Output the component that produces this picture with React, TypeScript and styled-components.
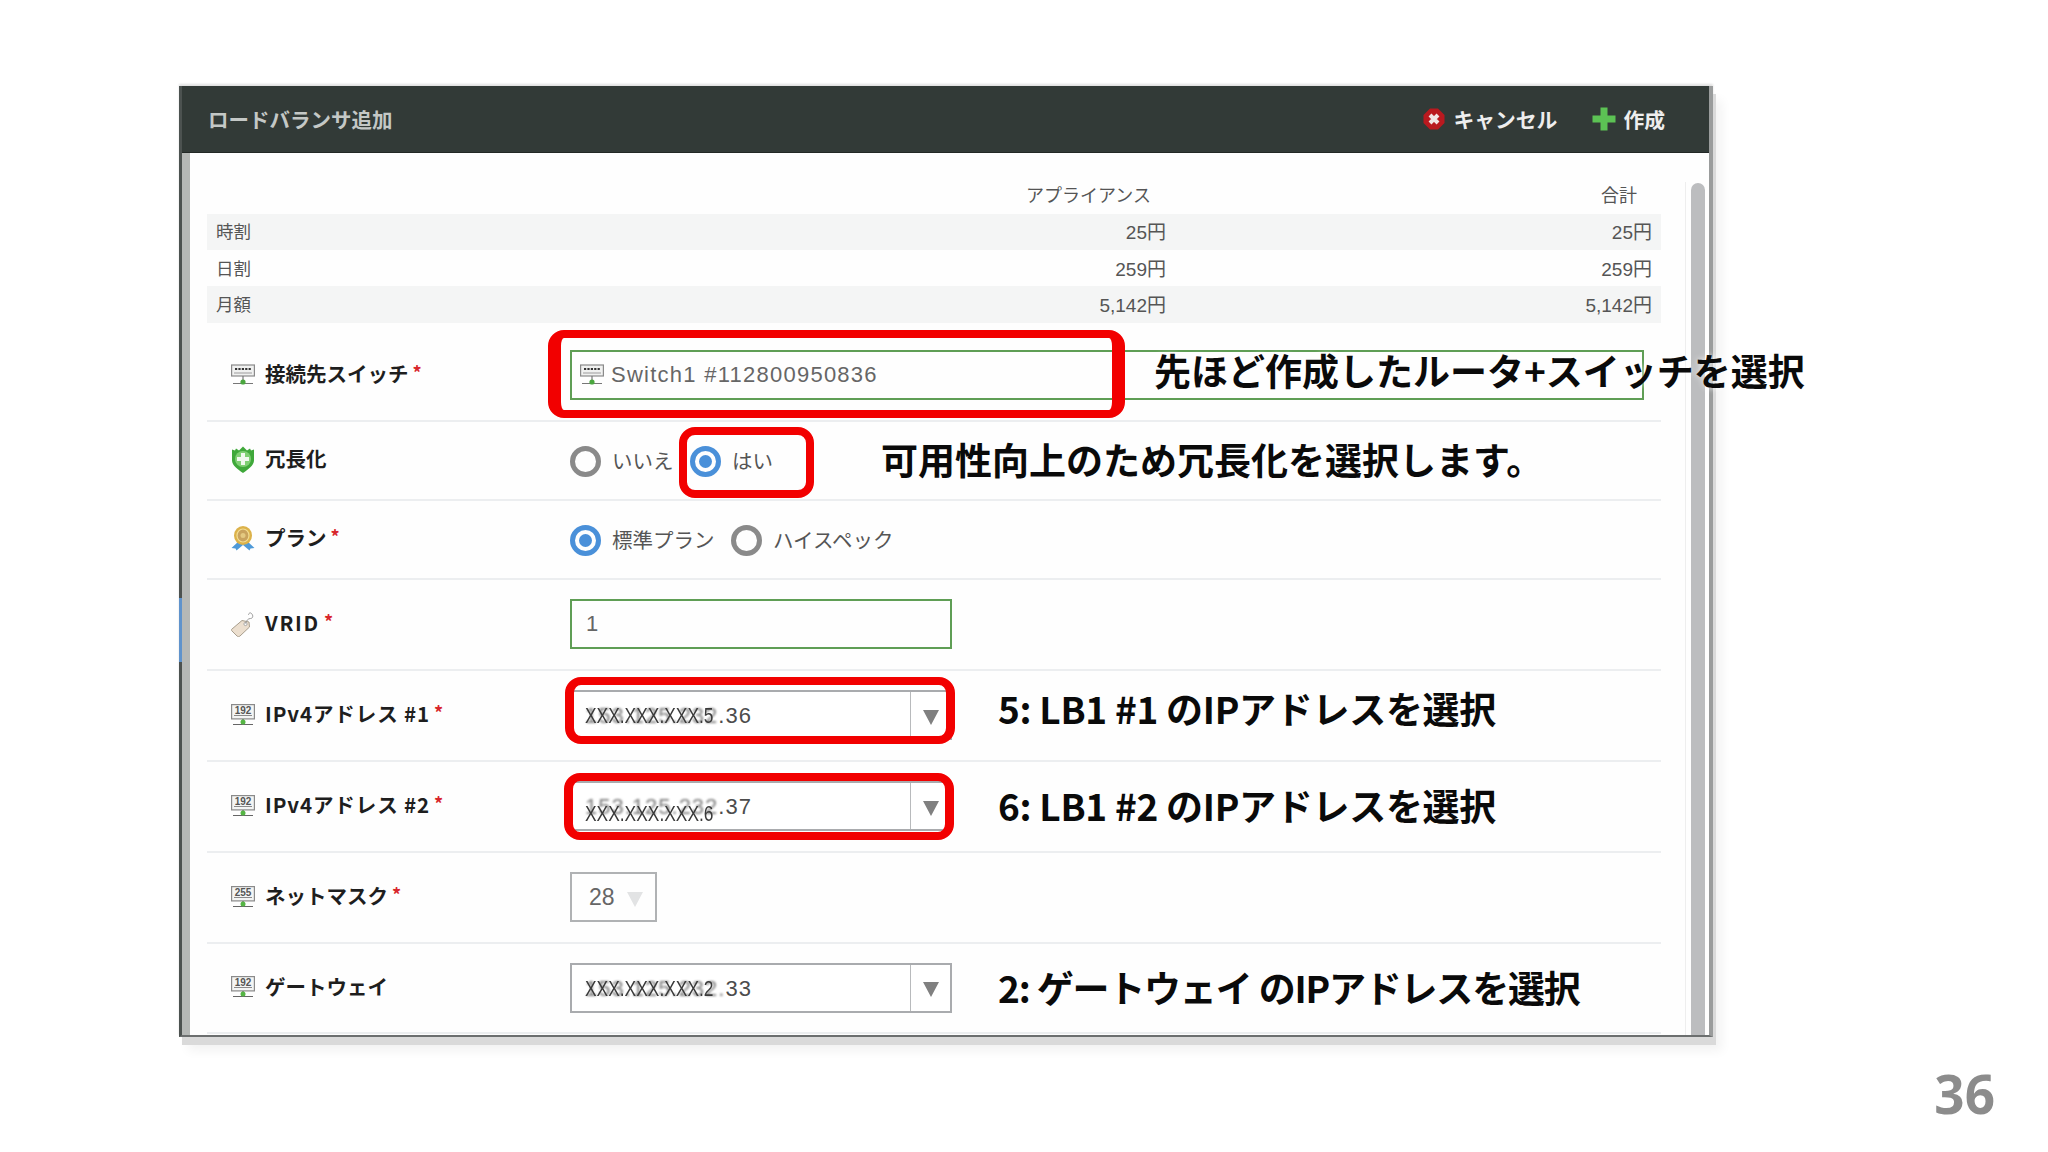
import React from 'react';
import styled, { createGlobalStyle } from 'styled-components';

const GlobalStyle = createGlobalStyle`
  html, body {
    margin: 0;
    padding: 0;
    background: #ffffff;
  }
  body {
    font-family: 'Noto Sans CJK JP', 'Noto Sans', sans-serif;
  }
`;

const Page = styled.div`
  position: relative;
  width: 2048px;
  height: 1152px;
  padding: 86px 0 0 179px;
  box-sizing: border-box;
  overflow: hidden;
  background: #ffffff;
`;

// --- Dialog panel ---

const Panel = styled.div`
  width: 1534px;
  height: 951px;
  box-sizing: border-box;
  display: flex;
  flex-direction: column;
  background: #fefefe;
  border-left: 3px solid #4c5250;
  border-right: 4px solid #9a9c9c;
  border-bottom: 2px solid #6c6f6f;
  box-shadow: 3px 8px 0 #dadada, 9px 14px 10px rgba(0, 0, 0, 0.05), 0 -2px 2px rgba(0, 0, 0, 0.12);
`;

const Header = styled.div`
  height: 67px;
  flex-shrink: 0;
  display: flex;
  align-items: center;
  padding: 0 44px 0 26px;
  background: #323a37;
  border-bottom: 1px solid #222826;
  box-sizing: border-box;
`;

const HeaderTitle = styled.div`
  flex: 1;
  font-size: 20.5px;
  font-weight: 700;
  color: #c4c8c6;
`;

const HeaderAction = styled.div<{ $gap: number }>`
  display: flex;
  align-items: center;
  gap: ${(p) => p.$gap}px;
  margin-left: 35px;
  font-size: 20.8px;
  font-weight: 700;
  color: #eeeeee;
`;

const Body = styled.div`
  flex: 1;
  min-height: 0;
  display: flex;
`;

const LeftRail = styled.div`
  position: relative;
  width: 8px;
  flex-shrink: 0;
  background: #b5b8b6;
`;

const RailMark = styled.div`
  position: absolute;
  left: -3px;
  top: 445px;
  width: 3px;
  height: 64px;
  background: #5f93cc;
`;

const Content = styled.div`
  width: 1454px;
  flex-shrink: 0;
  margin-left: 17px;
  display: flex;
  flex-direction: column;
`;

const ScrollTrack = styled.div`
  flex: 1;
  display: flex;
  justify-content: center;
  margin: 29px 0 0 24px;
  border-left: 1px solid #eeeeee;
`;

const ScrollThumb = styled.div`
  width: 14px;
  margin-top: 1px;
  background: #bcbdbf;
  border-radius: 7px 7px 0 0;
`;

// --- Price table ---

const PriceHead = styled.div`
  height: 60.5px;
  box-sizing: border-box;
  padding-top: 26px;
  display: grid;
  grid-template-columns: 959px 495px;
  font-size: 18px;
  color: #555555;
`;

const HeadCellA = styled.div`
  padding-right: 15px;
  text-align: right;
  line-height: 30px;
`;

const HeadCellB = styled.div`
  padding-right: 24px;
  text-align: right;
  line-height: 30px;
`;

const PriceRow = styled.div<{ $striped?: boolean }>`
  height: 36.4px;
  display: grid;
  grid-template-columns: 200px 750px 486px;
  align-items: center;
  padding: 0 0 2px 9px;
  box-sizing: border-box;
  font-size: 17.5px;
  color: #555555;
  background: ${(p) => (p.$striped ? '#f4f5f5' : 'transparent')};
`;

const Amount = styled.div`
  text-align: right;
  font-family: 'Liberation Sans', 'Noto Sans CJK JP', sans-serif;
  font-size: 19px;
`;

// --- Form rows ---

const FormRow = styled.div<{ $h: number; $top?: number }>`
  height: ${(p) => p.$h}px;
  box-sizing: border-box;
  padding: ${(p) => p.$top ?? 0}px 0 0 24px;
  display: flex;
  align-items: center;
  border-bottom: 2px solid #eceef0;
`;

const Label = styled.div`
  width: 339px;
  flex-shrink: 0;
  display: flex;
  align-items: center;
  gap: 10px;
  padding-bottom: 4px;
  box-sizing: border-box;
  font-size: 20.5px;
  font-weight: 700;
  color: #1e1e1e;

  svg {
    margin-top: 3px;
    flex-shrink: 0;
  }
`;

const LabelText = styled.span<{ $track?: number }>`
  letter-spacing: ${(p) => p.$track ?? 0}px;
`;

const Required = styled.span`
  color: #d8262c;
  font-size: 18px;
  position: relative;
  top: -2px;
  margin-left: 4px;
`;

const InputBox = styled.div<{ $w: number; $pad: number }>`
  width: ${(p) => p.$w}px;
  height: 50px;
  box-sizing: border-box;
  display: flex;
  align-items: center;
  gap: 7px;
  padding-left: ${(p) => p.$pad}px;
  border: 2px solid #5f9e55;
  font-family: 'Liberation Sans', sans-serif;
  font-size: 22px;
  letter-spacing: 1.25px;
  color: #666666;
`;

const SelectBox = styled.div`
  width: 382px;
  height: 50px;
  box-sizing: border-box;
  display: flex;
  border: 2px solid #a9abae;
  background: #ffffff;
  font-family: 'Liberation Sans', sans-serif;
  font-size: 22px;
  color: #4c4c4c;
`;

const SelectValue = styled.div`
  position: relative;
  flex: 1;
  padding-left: 13px;
  letter-spacing: 1px;
  line-height: 48px;
  white-space: nowrap;
`;

const Smudge = styled.span`
  color: #7d7d7d;
  filter: blur(1px);
`;

const Masked = styled.span<{ $dy: number }>`
  position: absolute;
  left: 13px;
  top: ${(p) => p.$dy}px;
  transform: scaleX(0.79);
  transform-origin: left center;
  font-family: 'Liberation Sans', sans-serif;
  font-size: 22px;
  letter-spacing: 0;
  color: #3a3a3a;
`;

const CaretCell = styled.div`
  width: 39px;
  flex-shrink: 0;
  display: flex;
  align-items: center;
  justify-content: center;
  border-left: 1px solid #b8babc;
`;

const Caret = styled.div<{ $faint?: boolean }>`
  width: 0;
  height: 0;
  margin-top: 4px;
  border-left: 8px solid transparent;
  border-right: 8px solid transparent;
  border-top: 15px solid ${(p) => (p.$faint ? '#e2e3e4' : '#808080')};
`;

const SmallSelect = styled.div`
  width: 87px;
  height: 50px;
  box-sizing: border-box;
  display: flex;
  align-items: center;
  gap: 12px;
  padding-left: 17px;
  border: 2px solid #b0b2b4;
  font-family: 'Liberation Sans', sans-serif;
  font-size: 23px;
  color: #666666;
`;

const RadioGroup = styled.div`
  display: flex;
  align-items: center;
  font-size: 20.5px;
  line-height: 30px;
  color: #555555;
`;

const RadioItem = styled.div<{ $w: number }>`
  width: ${(p) => p.$w}px;
  display: flex;
  align-items: center;
  gap: 11px;
  flex-shrink: 0;
`;

const Radio = styled.span<{ $on?: boolean }>`
  width: 31px;
  height: 31px;
  margin-top: 3px;
  box-sizing: border-box;
  flex-shrink: 0;
  display: flex;
  align-items: center;
  justify-content: center;
  border-radius: 50%;
  border: 5px solid ${(p) => (p.$on ? '#4a90d9' : '#8a8a8a')};

  &::after {
    content: '';
    width: 13px;
    height: 13px;
    border-radius: 50%;
    background: ${(p) => (p.$on ? '#4a90d9' : 'transparent')};
  }
`;

// --- Things drawn on top of the screenshot ---

const Highlight = styled.div<{ $x: number; $y: number; $w: number; $h: number; $side: number }>`
  position: absolute;
  left: ${(p) => p.$x}px;
  top: ${(p) => p.$y}px;
  width: ${(p) => p.$w}px;
  height: ${(p) => p.$h}px;
  box-sizing: border-box;
  border: 8px solid #f20000;
  border-left-width: ${(p) => p.$side}px;
  border-right-width: ${(p) => p.$side}px;
  border-radius: 16px;
`;

const Note = styled.div<{ $x: number; $y: number; $track?: number }>`
  position: absolute;
  left: ${(p) => p.$x}px;
  top: ${(p) => p.$y}px;
  transform: translateY(-50%);
  font-size: 37px;
  font-weight: 700;
  line-height: 1.2;
  letter-spacing: ${(p) => p.$track ?? 0}px;
  color: #0a0a0a;
  white-space: nowrap;
  text-shadow: 0 0 6px rgba(255, 255, 255, 0.9);
`;

const PageNumber = styled.div`
  position: absolute;
  right: 53px;
  top: 1058px;
  font-family: 'Noto Sans', sans-serif;
  font-size: 53px;
  font-weight: 700;
  line-height: 72px;
  color: #8c8c8c;
`;

// --- Icons ---

const CancelIcon = () => (
  <svg width="22" height="22" viewBox="0 0 22 22">
    <polygon points="7,0.5 15,0.5 21.5,7 21.5,15 15,21.5 7,21.5 0.5,15 0.5,7" fill="#b9191f" />
    <path d="M7 7l8 8M15 7l-8 8" stroke="#f1e6e6" strokeWidth="4" />
  </svg>
);

const PlusIcon = () => (
  <svg width="24" height="24" viewBox="0 0 24 24">
    <path d="M8.5 0.5h7v8h8v7h-8v8h-7v-8h-8v-7h8z" fill="#5cc254" />
  </svg>
);

const SwitchIcon = () => (
  <svg width="24" height="22" viewBox="0 0 24 22">
    <rect x="0.6" y="1" width="22.8" height="11" fill="#f0f1f0" stroke="#8a8a8a" strokeWidth="1.2" />
    <path d="M4 5h2.2M7.4 5h2.2M10.8 5h2.2M14.2 5h2.2M17.600 5h2.2" stroke="#333" strokeWidth="1.8" />
    <path d="M3 9h18" stroke="#aaa" strokeWidth="1.2" />
    <path d="M12 12v7M2 19.5h20" stroke="#777" strokeWidth="1.2" />
    <circle cx="12" cy="18" r="2.6" fill="#4aa63e" />
  </svg>
);

const NetIcon = ({ code }: { code: string }) => (
  <svg width="24" height="22" viewBox="0 0 24 22">
    <rect x="0.6" y="0.6" width="22.8" height="14.3" fill="#f4f5f4" stroke="#8a8a8a" strokeWidth="1.2" />
    <text x="12" y="9.6" textAnchor="middle" fontSize="10" fontFamily="Liberation Sans, sans-serif" fill="#555">
      {code}
    </text>
    <path d="M3 11.5h18" stroke="#8a8a8a" strokeWidth="1" />
    <path d="M12 15v5M2 20.5h20" stroke="#666" strokeWidth="1.2" />
    <circle cx="12" cy="18" r="2.5" fill="#55b544" />
  </svg>
);

const ShieldIcon = () => (
  <svg width="24" height="27" viewBox="0 0 24 27">
    <path d="M12 0.5l4 4 3-2 1 2 3-1v11c0 5-6 9-11 12.5C7 23.5 1 19.5 1 14.5v-11l3 1 1-2 3 2z" fill="#3fa83a" />
    <circle cx="12" cy="13" r="8" fill="#7fcf73" />
    <path d="M10 7h4v4h4v4h-4v4h-4v-4H6v-4h4z" fill="#f0f8ee" />
  </svg>
);

const MedalIcon = () => (
  <svg width="24" height="25" viewBox="0 0 24 25">
    <path d="M8 15L0.5 22l4 .5 1 2L12 19l6.500 5.500 1-2 4-.5L16 15z" fill="#4f9ad8" />
    <ellipse cx="12" cy="9.5" rx="9" ry="9.5" fill="#dcb24a" />
    <ellipse cx="12" cy="9.5" rx="6" ry="6.5" fill="#c9a35e" stroke="#f3dd92" strokeWidth="1.2" />
    <circle cx="12" cy="9.5" r="2.5" fill="#e4c981" />
  </svg>
);

const TagIcon = () => (
  <svg width="24" height="26" viewBox="0 0 24 26">
    <path d="M1 18L11 9.5l7 1.5 .5 5-9.500 9c-1 .8-2 .8-3 0l-5-5c-.8-.8-.8-1.5 0-2z" fill="#ecdfcf" stroke="#a89e8d" strokeWidth="1" />
    <circle cx="14.5" cy="13" r="1.6" fill="#fff" stroke="#999" strokeWidth="0.8" />
    <path d="M14.5 12.5c1-3 2.5-5 5-5 2.5 0 3-3 1-5-1.5-1.5-3 0-3 1.5" fill="none" stroke="#999" strokeWidth="1" />
  </svg>
);

const prices = [
  { name: '時割', unit: '25円', total: '25円', striped: true },
  { name: '日割', unit: '259円', total: '259円', striped: false },
  { name: '月額', unit: '5,142円', total: '5,142円', striped: true },
];

const IpSelect = ({ faint, clear, masked, dy }: { faint: string; clear: string; masked: string; dy: number }) => (
  <SelectBox>
    <SelectValue>
      <Smudge>{faint}</Smudge>
      {clear}
      <Masked $dy={dy}>{masked}</Masked>
    </SelectValue>
    <CaretCell>
      <Caret />
    </CaretCell>
  </SelectBox>
);

const App = () => (
  <Page>
    <GlobalStyle />
    <Panel>
      <Header>
        <HeaderTitle>ロードバランサ追加</HeaderTitle>
        <HeaderAction $gap={8}>
          <CancelIcon />
          キャンセル
        </HeaderAction>
        <HeaderAction $gap={7}>
          <PlusIcon />
          作成
        </HeaderAction>
      </Header>
      <Body>
        <LeftRail>
          <RailMark />
        </LeftRail>
        <Content>
          <PriceHead>
            <HeadCellA>アプライアンス</HeadCellA>
            <HeadCellB>合計</HeadCellB>
          </PriceHead>
          {prices.map((row) => (
            <PriceRow key={row.name} $striped={row.striped}>
              <div>{row.name}</div>
              <Amount>{row.unit}</Amount>
              <Amount>{row.total}</Amount>
            </PriceRow>
          ))}
          <FormRow $h={99} $top={8}>
            <Label>
              <SwitchIcon />
              <LabelText>
                接続先スイッチ<Required>*</Required>
              </LabelText>
            </Label>
            <InputBox $w={1074} $pad={8}>
              <SwitchIcon />
              Switch1 #112800950836
            </InputBox>
          </FormRow>
          <FormRow $h={79}>
            <Label>
              <ShieldIcon />
              <LabelText>冗長化</LabelText>
            </Label>
            <RadioGroup>
              <RadioItem $w={120}>
                <Radio />
                いいえ
              </RadioItem>
              <RadioItem $w={100}>
                <Radio $on />
                はい
              </RadioItem>
            </RadioGroup>
          </FormRow>
          <FormRow $h={79}>
            <Label>
              <MedalIcon />
              <LabelText>
                プラン<Required>*</Required>
              </LabelText>
            </Label>
            <RadioGroup>
              <RadioItem $w={161}>
                <Radio $on />
                標準プラン
              </RadioItem>
              <RadioItem $w={170}>
                <Radio />
                ハイスペック
              </RadioItem>
            </RadioGroup>
          </FormRow>
          <FormRow $h={91}>
            <Label>
              <TagIcon />
              <LabelText $track={1.7}>
                VRID<Required>*</Required>
              </LabelText>
            </Label>
            <InputBox $w={382} $pad={14}>1</InputBox>
          </FormRow>
          <FormRow $h={91}>
            <Label>
              <NetIcon code="192" />
              <LabelText $track={0.9}>
                IPv4アドレス #1<Required>*</Required>
              </LabelText>
            </Label>
            <IpSelect faint="153.125.232" clear=".36" masked="XXX.XXX.XXX.5" dy={0} />
          </FormRow>
          <FormRow $h={91}>
            <Label>
              <NetIcon code="192" />
              <LabelText $track={0.9}>
                IPv4アドレス #2<Required>*</Required>
              </LabelText>
            </Label>
            <IpSelect faint="153.125.232" clear=".37" masked="XXX.XXX.XXX.6" dy={7} />
          </FormRow>
          <FormRow $h={91}>
            <Label>
              <NetIcon code="255" />
              <LabelText>
                ネットマスク<Required>*</Required>
              </LabelText>
            </Label>
            <SmallSelect>
              28
              <Caret $faint />
            </SmallSelect>
          </FormRow>
          <FormRow $h={90}>
            <Label>
              <NetIcon code="192" />
              <LabelText>ゲートウェイ</LabelText>
            </Label>
            <IpSelect faint="153.125.232." clear="33" masked="XXX.XXX.XXX.2" dy={0} />
          </FormRow>
        </Content>
        <ScrollTrack>
          <ScrollThumb />
        </ScrollTrack>
      </Body>
    </Panel>

    <Highlight $x={548} $y={330} $w={577} $h={88} $side={13} />
    <Highlight $x={679} $y={427} $w={135} $h={71} $side={8} />
    <Highlight $x={565} $y={677} $w={390} $h={67} $side={9} />
    <Highlight $x={564} $y={773} $w={390} $h={67} $side={9} />

    <Note $x={1154} $y={370}>先ほど作成したルータ+スイッチを選択</Note>
    <Note $x={881} $y={459}>可用性向上のため冗長化を選択します。</Note>
    <Note $x={998} $y={708} $track={-0.3}>5: LB1 #1 のIPアドレスを選択</Note>
    <Note $x={998} $y={805} $track={-0.3}>6: LB1 #2 のIPアドレスを選択</Note>
    <Note $x={998} $y={987} $track={-1.2}>2: ゲートウェイ のIPアドレスを選択</Note>

    <PageNumber>36</PageNumber>
  </Page>
);

export default App;
